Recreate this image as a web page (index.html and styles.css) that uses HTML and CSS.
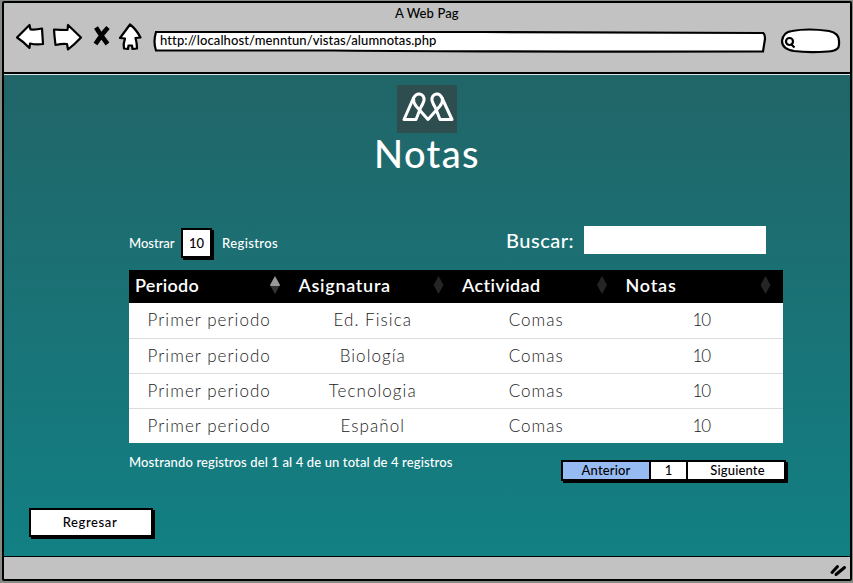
FILE: index.html
```html
<!DOCTYPE html>
<html lang="es">
<head>
<meta charset="utf-8">
<title>Notas</title>
<link rel="stylesheet" href="styles.css">
</head>
<body>
<div class="window">
  <header class="chrome">
    <div class="title">A Web Pag</div>
    <div class="toolbar">
      <svg class="nav" width="130" height="32" viewBox="14 21 130 32" fill="#fff" stroke="#000" stroke-width="2.2" stroke-linejoin="round" stroke-linecap="round">
        <path d="M17 37.5 29.500 25 30.500 29.500Q36 30 42 28.500L43 44Q36 45 30 43.500L29.500 48Q24 42 17 37.500Z"/>
        <path d="M81 37.500 68 25 67.500 30Q60 30 54 29.500L54.500 36 55.500 45Q62 43.500 67 44L68 49.500Q75 44 81 37.500Z"/>
        <path d="M96 27.500Q100 34 107.500 44M108 27.500Q102 34 95.500 44" stroke-width="4.600" stroke-linecap="butt" fill="none"/>
        <path d="M130 24.500Q126 30 120 38L125 38.500Q123 44 124 48.500L128 49 128.500 45.500 132 45.500 132.500 49 137 48.500Q137 43 135.500 38L140.500 37.500Q136 29 130 24.500Z"/>
      </svg>
      <div class="address">
        <svg class="outline" width="614" height="23" viewBox="0 0 614 23"><path d="M3 2 Q200 1.500 330 2 Q500 2 610 3 Q612 4 612 9 L610 21.500 Q350 22 180 20.500 L3 20.500 Q0 12 3 2Z"/></svg>
        <span class="url">http://localhost/menntun/vistas/alumnotas.php</span>
      </div>
      <svg class="search" width="62" height="28" viewBox="780 27 62 28" fill="#fff" stroke="#000" stroke-width="2.2">
        <path d="M792 31Q808 28 829 31 840 33 839 43 840 51 828 51.500 808 53 794 51 782 49 782 41 783 32 792 31Z"/>
        <circle cx="789.500" cy="41.500" r="3.500" stroke-width="2.200"/><path d="m791 44 3.500 3.500"/>
      </svg>
    </div>
  </header>
  <main class="page">
    <svg class="logo" width="60" height="48" viewBox="0 0 60 48">
      <rect width="60" height="48" fill="#2e4d4f"/>
      <g fill="none" stroke="#fff" stroke-width="3" stroke-linejoin="round">
        <path d="M23.500 23 19 34.500H7L16.500 13Q19 8.500 22.500 9 27.500 10 27 15.500 26 19 23.500 23"/>
        <path d="M38.500 23 43 34.500H55L45 13Q43 8.500 39.500 9 34.500 10 35 15.500 36 19 38.500 23"/>
        <path d="M16.500 12.500Q16 17 19 21L31 34.500 43 21Q46 17 45.500 12.500"/>
      </g>
    </svg>
    <h1>Notas</h1>
    <div class="controls">
      <span class="show">Mostrar</span><span class="count">10</span><span class="records">Registros</span>
      <span class="find">Buscar:</span><span class="field"></span>
    </div>
    <table>
      <thead><tr>
        <th><div><span class="c1">Periodo</span><i class="sort asc"></i></div></th>
        <th><div><span class="c2">Asignatura</span><i class="sort"></i></div></th>
        <th><div><span class="c3">Actividad</span><i class="sort"></i></div></th>
        <th><div><span class="c4">Notas</span><i class="sort"></i></div></th>
      </tr></thead>
      <tbody>
        <tr><td>Primer periodo</td><td>Ed. Fisica</td><td>Comas</td><td>10</td></tr>
        <tr><td>Primer periodo</td><td>Biología</td><td>Comas</td><td>10</td></tr>
        <tr><td>Primer periodo</td><td>Tecnologia</td><td>Comas</td><td>10</td></tr>
        <tr><td>Primer periodo</td><td>Español</td><td>Comas</td><td>10</td></tr>
      </tbody>
    </table>
    <div class="summary">
      <span class="info">Mostrando registros del 1 al 4 de un total de 4 registros</span>
      <div class="pager"><span class="prev">Anterior</span><span class="num">1</span><span class="next">Siguiente</span></div>
    </div>
    <div class="back">Regresar</div>
  </main>
  <footer><svg width="18" height="16" viewBox="830 562 18 16" fill="none" stroke="#000" stroke-width="3" stroke-linecap="round"><path d="M833 572.500 838.500 566.500M837 574.500 845.500 567.500"/></svg></footer>
</div>
</body>
</html>
```

FILE: styles.css
```css
* { box-sizing: border-box; }
body {
  margin: 0;
  height: 583px;
  padding: 1px 1px 2px 2px;
  background: #858b85;
  font: 500 13px/16px Lato, "Liberation Sans", sans-serif;
  color: #000;
  overflow: hidden;
}
.window {
  height: 580px;
  border: 2px solid #000;
  border-radius: 2px;
  display: flex;
  flex-direction: column;
}
.chrome {
  height: 71px;
  flex: none;
  background: #c2c2c2;
  border-bottom: 2px solid #000;
}
.title {
  height: 18px;
  padding: 2px 0 0 391px;
  letter-spacing: .1px;
}
.toolbar { display: flex; padding-left: 10px; }
.nav { margin-right: 9px; }
.address {
  display: flex;
  width: 614px;
  height: 23px;
  margin-top: 9px;
}
.outline { margin-right: -614px; flex: none; fill: #fff; stroke: #000; stroke-width: 2.2; }
.url { z-index: 1; padding: 2px 0 0 7px; letter-spacing: .1px; }
.search { margin: 6px 0 0 13px; }
.page {
  height: 482px;
  flex: none;
  border-top: 1px solid #dce5e5;
  background: linear-gradient(#216568, #128084);
  color: #fff;
}
.logo { display: block; margin: 10px 0 0 393px; }
h1 {
  margin: 0;
  height: 93px;
  padding: 0 0 0 370px;
  font: 500 38px/40px Lato, sans-serif;
  letter-spacing: 1.4px;
}
.controls { display: flex; height: 44px; padding: 0 0 0 125px; }
.show, .records { padding-top: 9px; letter-spacing: .4px; }
.show { width: 52px; letter-spacing: 0; }
.count {
  width: 31px; height: 30px;
  margin-top: 2px;
  border: 2px solid #000;
  box-shadow: 2px 2px 0 #000;
  background: #fff;
  color: #000;
  line-height: 26px;
  text-align: center;
  margin-right: 10px;
}
.records { width: 284px; }
.find { width: 78px; padding-top: 3px; font-size: 20px; line-height: 22px; letter-spacing: .5px; }
.field { width: 182px; height: 28px; background: #fff; }
table {
  width: 654px;
  margin-left: 125px;
  border-collapse: collapse;
  table-layout: fixed;
  background: #fff;
  color: #222;
}
th { height: 33px; padding: 0 12.500px 3px 6px; background: #000; color: #fff; font-size: 18px; line-height: 22px; font-weight: 600; }
th div { display: flex; justify-content: space-between; align-items: center; }
.c1 { letter-spacing: .3px; }
.c2 { letter-spacing: .7px; }
.c3 { letter-spacing: .4px; }
.c4 { letter-spacing: .8px; }
.sort {
  width: 10px; height: 18px;
  background: #252525;
  clip-path: polygon(50% 0, 100% 50%, 50% 100%, 0 50%);
}
.sort.asc { background: linear-gradient(#999 55%, #333 55%); }
td {
  height: 35px;
  padding: 0 4px 0 1px;
  border-bottom: 1px solid #ddd;
  text-align: center;
  font: 300 17px/20px Lato, sans-serif;
  letter-spacing: 1.05px;
}
td:last-child { padding: 0; letter-spacing: -1px; }
tr:last-child td { border: 0; }
.summary { display: flex; height: 65px; }
.info { width: 432px; padding: 11px 0 0 125px; letter-spacing: .13px; white-space: nowrap; }
.pager {
  display: flex;
  width: 225px; height: 21px;
  margin: 17px 0 0 125px;
  border: 2px solid #000;
  box-shadow: 2px 2px 0 #000;
  background: #fff;
  color: #000;
  text-align: center;
  line-height: 17px;
  letter-spacing: .15px;
}
.prev { width: 86px; background: #96bbf2; }
.num { width: 39px; border: solid #000; border-width: 0 2px; }
.next { flex: 1; padding-left: 3px; }
.back {
  width: 124px; height: 29px;
  margin-left: 25px;
  border: 2px solid #000;
  box-shadow: 2px 2px 0 #000;
  background: #fff;
  color: #000;
  text-align: center;
  line-height: 25px;
  letter-spacing: .6px;
  padding-right: 2px;
}
footer {
  flex: 1;
  display: flex;
  justify-content: flex-end;
  padding: 5px 3px 0 0;
  border-top: 1px solid #000;
  background: #c2c2c2;
}
```
